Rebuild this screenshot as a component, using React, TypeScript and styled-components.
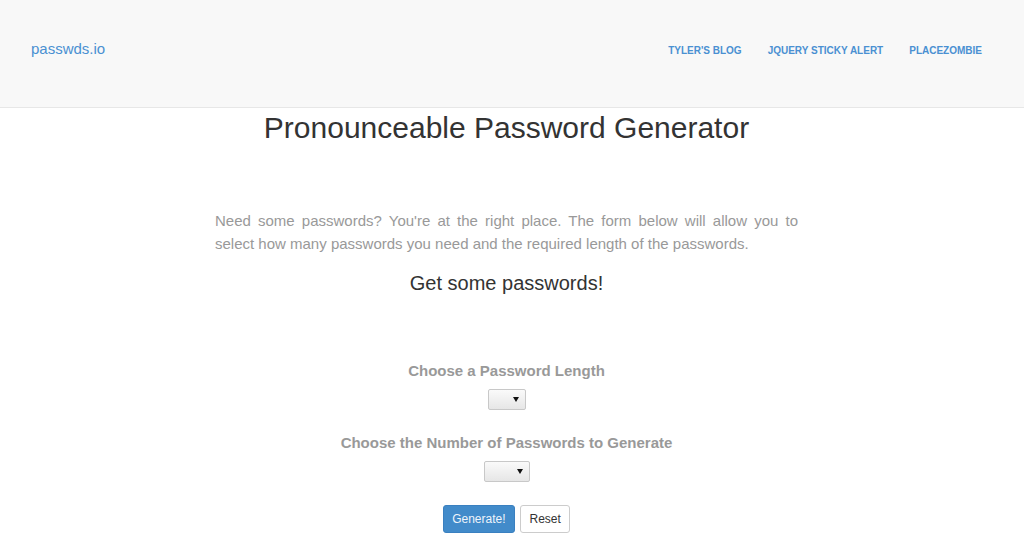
import React from "react";
import styled, { createGlobalStyle } from "styled-components";

const Global = createGlobalStyle`
  html, body { margin: 0; padding: 0; background: #fff; }
  body { font-family: "Liberation Sans", Arial, sans-serif; color: #333; }
  * { box-sizing: border-box; }
`;

const Navbar = styled.nav`
  height: 108px;
  background: #f8f8f8;
  border-bottom: 1px solid #e7e7e7;
  display: flex;
  align-items: center;
  justify-content: space-between;
  padding: 0 42px 0 31px;
`;

const Brand = styled.a`
  font-size: 15px;
  color: #4a90d2;
  text-decoration: none;
  margin-top: -10px;
`;

const NavList = styled.ul`
  display: flex;
  gap: 26px;
  list-style: none;
  margin: -10px 0 0 0;
  padding: 0;
`;

const NavLink = styled.a`
  font-size: 10px;
  font-weight: bold;
  text-transform: uppercase;
  color: #4a90d2;
  text-decoration: none;
`;

const Main = styled.main`
  padding-right: 11px;
  display: flex;
  flex-direction: column;
  align-items: center;
`;

const Title = styled.h1`
  margin: 0;
  font-size: 30px;
  font-weight: normal;
  color: #333;
  line-height: 40px;
`;

const Intro = styled.p`
  width: 583px;
  margin: 61px 0 0 0;
  font-size: 15px;
  line-height: 23px;
  color: #999;
  text-align: justify;
`;

const Subtitle = styled.h3`
  margin: 15px 0 0 0;
  font-size: 20px;
  font-weight: normal;
  line-height: 26px;
  color: #333;
`;

const Form = styled.form`
  display: flex;
  flex-direction: column;
  align-items: center;
  margin-top: 65px;
`;

const Label = styled.label<{ $first?: boolean }>`
  display: block;
  margin-top: ${(p) => (p.$first ? "0" : "23px")};
  font-size: 15px;
  font-weight: bold;
  color: #999;
  line-height: 20px;
`;

const SelectBox = styled.div<{ $w: number }>`
  position: relative;
  margin-top: 8px;
  width: ${(p) => p.$w}px;
  height: 21px;
  border: 1px solid #c8c8c8;
  border-radius: 2px;
  background: linear-gradient(#fafafa, #e6e6e6);
  &::after {
    content: "";
    position: absolute;
    right: 6px;
    top: 7px;
    border-left: 3px solid transparent;
    border-right: 3px solid transparent;
    border-top: 5px solid #111;
  }
`;

const Buttons = styled.div`
  display: flex;
  gap: 5px;
  margin-top: 23px;
`;

const Button = styled.button<{ $primary?: boolean }>`
  height: 28px;
  padding: 0 8.5px;
  font-family: "Liberation Sans", Arial, sans-serif;
  font-size: 12px;
  border-radius: 3px;
  border: 1px solid ${(p) => (p.$primary ? "#3a80c0" : "#ccc")};
  background: ${(p) => (p.$primary ? "#428bca" : "#fff")};
  color: ${(p) => (p.$primary ? "#eef4fb" : "#333")};
`;

export default function App() {
  return (
    <>
      <Global />
      <Navbar>
        <Brand href="#">passwds.io</Brand>
        <NavList>
          <li><NavLink href="#">Tyler's Blog</NavLink></li>
          <li><NavLink href="#">jQuery Sticky Alert</NavLink></li>
          <li><NavLink href="#">PlaceZombie</NavLink></li>
        </NavList>
      </Navbar>
      <Main>
        <Title>Pronounceable Password Generator</Title>
        <Intro>
          Need some passwords? You're at the right place. The form below will allow you to
          select how many passwords you need and the required length of the passwords.
        </Intro>
        <Subtitle>Get some passwords!</Subtitle>
        <Form onSubmit={(e) => e.preventDefault()}>
          <Label $first>Choose a Password Length</Label>
          <SelectBox $w={38} />
          <Label>Choose the Number of Passwords to Generate</Label>
          <SelectBox $w={46} />
          <Buttons>
            <Button $primary type="submit">Generate!</Button>
            <Button type="reset">Reset</Button>
          </Buttons>
        </Form>
      </Main>
    </>
  );
}
